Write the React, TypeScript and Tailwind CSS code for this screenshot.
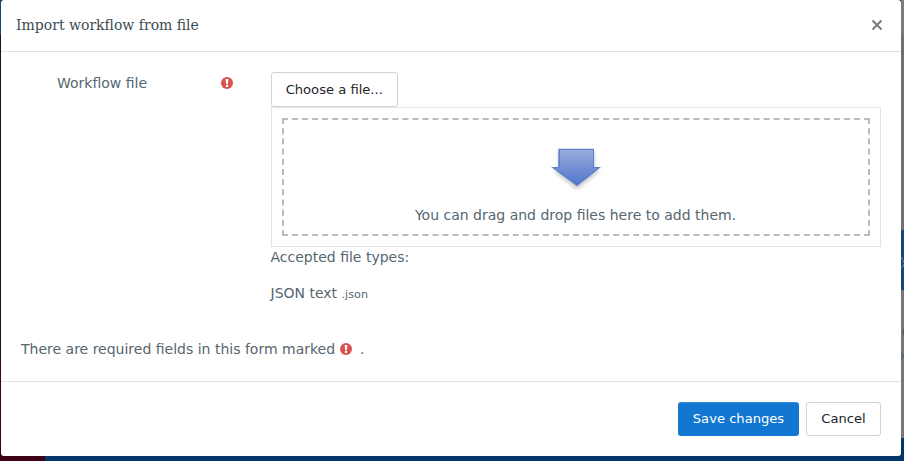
import React from "react";

function RequiredIcon() {
  return (
    <svg viewBox="0 0 12 12" className="block h-3 w-3 shrink-0" aria-label="Required">
      <circle cx="6" cy="6" r="6" fill="#d9534f" />
      <path d="M4.7 1.900h2.600l-.35 5.100H5.050z" fill="#fff" />
      <rect x="4.900" y="7.800" width="2.200" height="2.100" rx="0.3" fill="#fff" />
    </svg>
  );
}

function DropArrow() {
  return (
    <svg viewBox="0 0 60 50" className="block h-[50px] w-[60px]" aria-hidden="true">
      <defs>
        <linearGradient id="arrow-fill" x1="0" y1="0" x2="0" y2="1">
          <stop offset="0" stopColor="#9aafe0" />
          <stop offset="1" stopColor="#5075c8" />
        </linearGradient>
        <filter id="arrow-shadow" x="-20%" y="-20%" width="140%" height="150%">
          <feGaussianBlur stdDeviation="2" />
        </filter>
      </defs>
      <path d="M13 8H48V27H54L31 46L7 27H13z" fill="#000" opacity="0.25" filter="url(#arrow-shadow)" />
      <path d="M12 5H48V24H55L31 43L5 24H12z" fill="url(#arrow-fill)" />
      <path d="M12 5.500H48" stroke="#d5dff5" strokeWidth="1" />
      <path d="M13.500 24V6.500H47.500V24.500H53.500L31 42L7 24.500H13.500" fill="none" stroke="#5b7ec8" strokeWidth="1" />
    </svg>
  );
}

export default function App() {
  return (
    <div className="relative flex h-[461px] w-[904px] overflow-hidden bg-[#03366a] font-['DejaVu_Sans',sans-serif] text-[14px] leading-[21px] text-[#56666f]">
      <div className="flex w-px shrink-0 flex-col">
        <div className="h-[35px] bg-[#174482]" />
        <div className="h-[325px] bg-[#11161b]" />
        <div className="flex-1 bg-[#400014]" />
      </div>
      <div className="flex w-[900px] shrink-0 flex-col">
        <div className="bg-[linear-gradient(to_right,#400014_44px,#03366a_44px)]">
          <section className="flex h-[456px] flex-col rounded-[3px] bg-white">
            <header className="flex h-[52px] shrink-0 items-center justify-between border-b border-[#e0e3e5] pr-4 pl-[15px]">
              <h1 className="font-['DejaVu_Serif',serif] text-[14px] text-[#3c4c55]">Import workflow from file</h1>
              <button aria-label="Close" className="mb-px flex h-4 w-4 items-center justify-center">
                <svg viewBox="0 0 12 12" className="h-3 w-3">
                  <path d="M1.500 1.500L10.500 10.500M10.500 1.500L1.500 10.500" stroke="#7f7f7f" strokeWidth="2.200" />
                </svg>
              </button>
            </header>
            <main className="flex h-[330px] shrink-0 flex-col border-b border-[#e0e3e5] pr-5 pl-5">
              <div className="flex pt-5">
                <div className="flex w-[249.500px] shrink-0 items-start pt-px pl-9">
                  <span className="w-[163.500px]">Workflow file</span>
                  <span className="pt-1"><RequiredIcon /></span>
                </div>
                <div className="min-w-0 flex-1">
                  <button className="block h-[35px] w-[127.500px] rounded-[3px] border border-[#ced4da] text-[13.125px] whitespace-nowrap text-[#212529]">
                    Choose a file...
                  </button>
                  <div className="ml-[0.500px] h-[140px] border border-[#dfe5e8] p-[10px]">
                    <div className="flex h-full flex-col items-center border-2 border-dashed border-[#bbb] pt-[23px]">
                      <DropArrow />
                      <p className="mt-3 mr-px">You can drag and drop files here to add them.</p>
                    </div>
                  </div>
                  <p>Accepted file types:</p>
                  <p className="mt-[15px]">JSON text <small className="text-[11.200px]">.json</small></p>
                </div>
              </div>
              <div className="mt-[34px] flex items-center whitespace-pre">
                <span>There are required fields in this form marked </span>
                <span className="mb-px ml-[0.500px]"><RequiredIcon /></span>
                <span className="ml-2">.</span>
              </div>
            </main>
            <footer className="flex h-[74px] items-center justify-end gap-[7px] pr-5 text-[13.125px]">
              <button className="h-[34px] w-[121px] rounded-[3px] bg-[#1177d1] pb-0.5 text-white shadow-[inset_0_1px_0_rgba(255,255,255,0.15)]">Save changes</button>
              <button className="h-[34px] w-[75px] rounded-[3px] border border-[#ced4da] pb-0.5 text-[#212529]">Cancel</button>
            </footer>
          </section>
        </div>
        <div className="flex flex-1">
          <div className="w-[44px] bg-[#400014]" />
          <div className="flex-1 bg-[#03366a]" />
        </div>
      </div>
      <div className="flex w-[3px] shrink-0 flex-col">
        <div className="h-[35px] bg-[#7c7c7c]" />
        <div className="h-[195px] bg-[#707070]" />
        <div className="h-[60px] bg-[#174482] pt-[26px]">
          <svg viewBox="0 0 3 12" className="block h-3 w-[3px]">
            <path d="M.5 1L3 7M0 11H2L3 8" fill="none" stroke="#718092" />
          </svg>
        </div>
        <div className="h-[148px] bg-[#777] pt-[38px]">
          <svg viewBox="0 0 3 34" className="block h-[34px] w-[3px]">
            <path d="M3 1Q1 4 3 7M0 25L2 28L0 32M2 28H3" fill="none" stroke="#345b80" />
          </svg>
        </div>
        <div className="flex-1 bg-[#03366a]" />
      </div>
    </div>
  );
}
